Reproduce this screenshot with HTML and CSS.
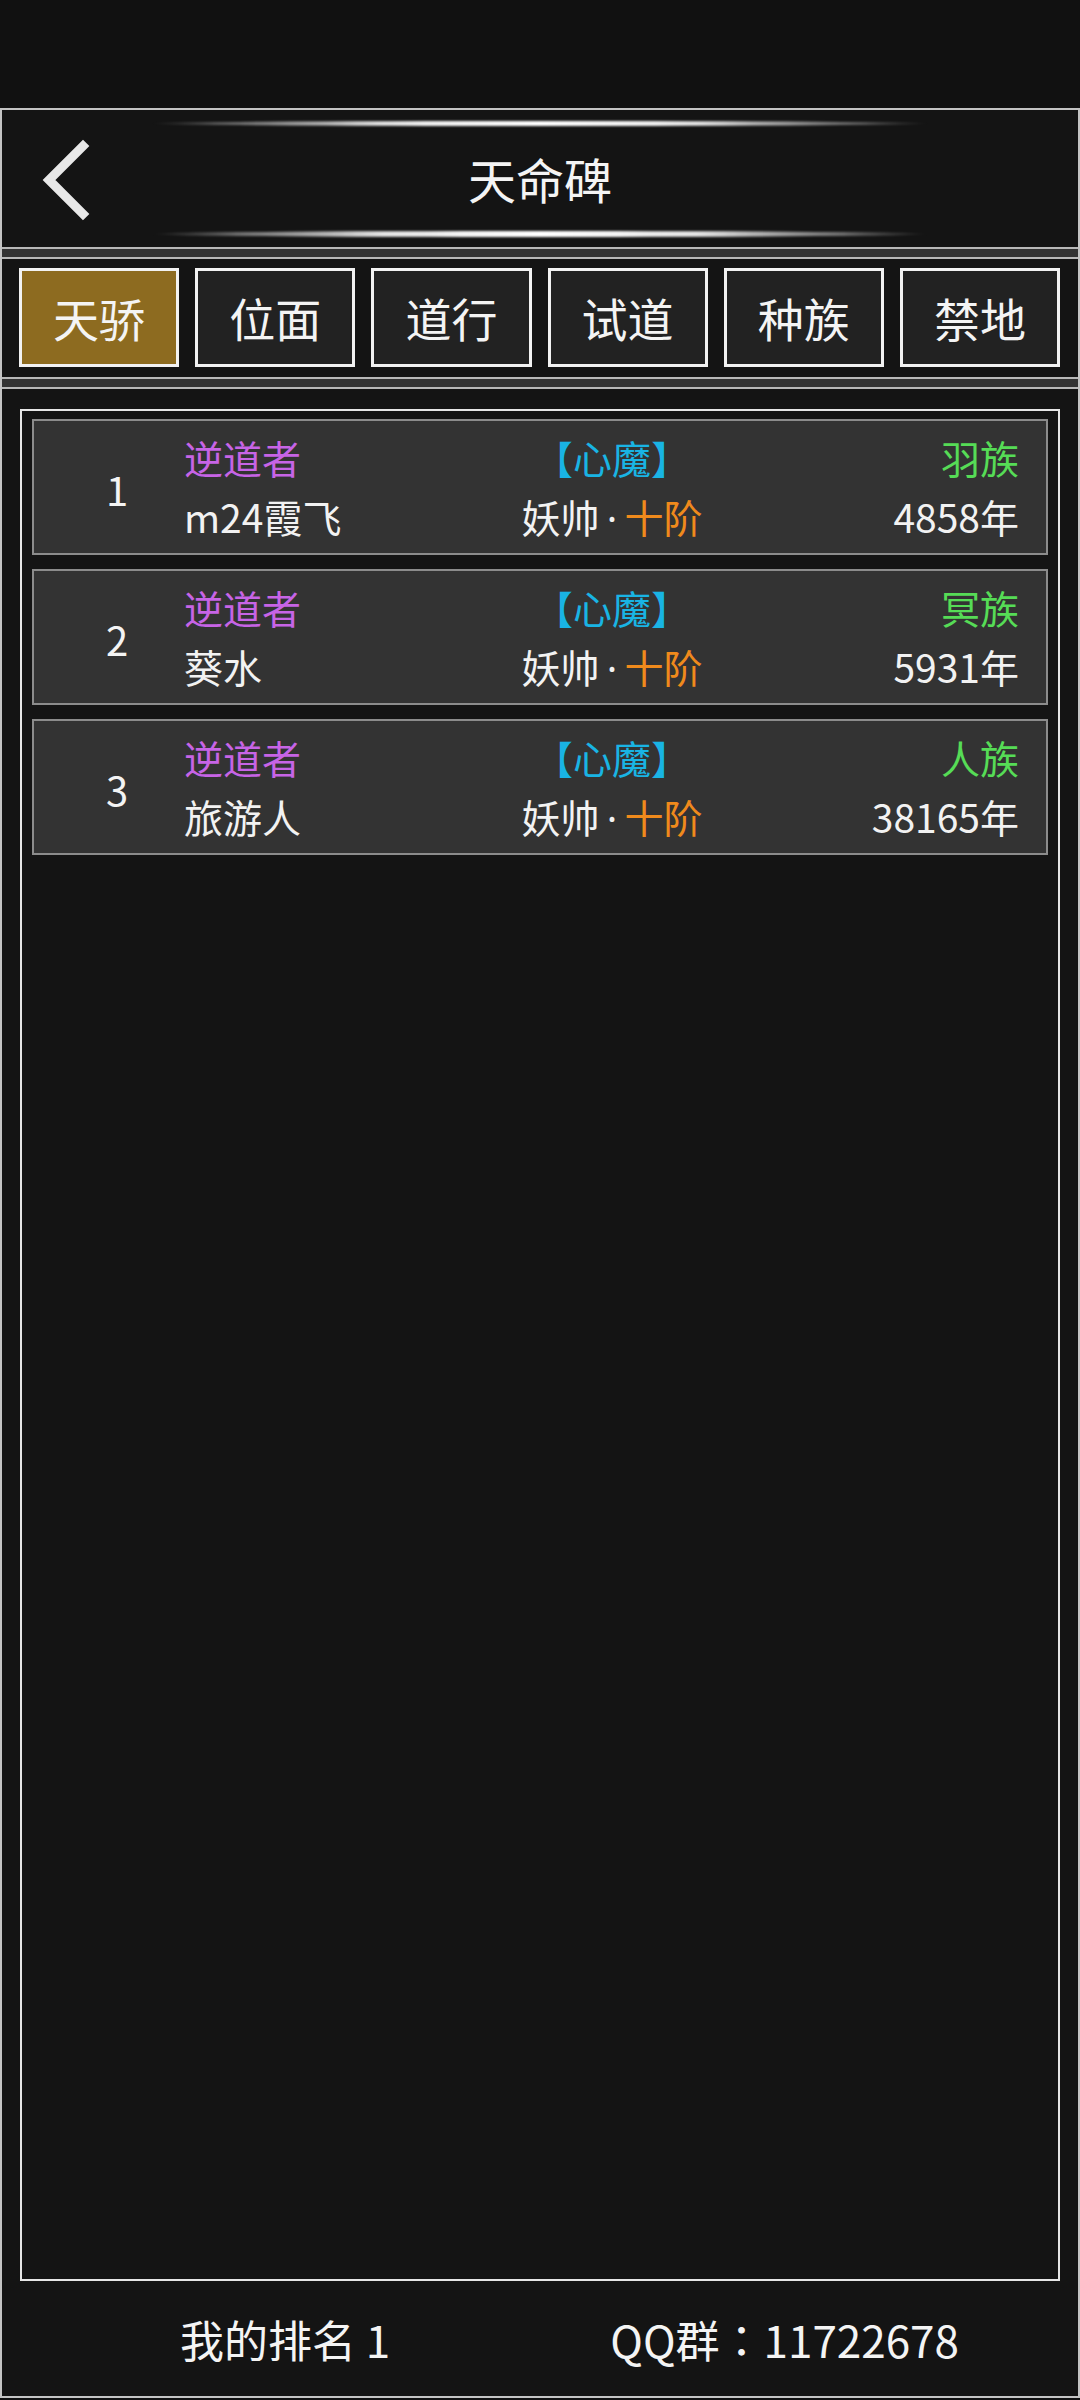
FILE: index.html
```html
<!DOCTYPE html>
<html lang="zh-CN">
<head>
<meta charset="utf-8">
<title>天命碑</title>
<link rel="stylesheet" href="styles.css">
</head>
<body>
<div class="status"></div>
<div class="app">
  <header class="header">
    <div class="glow"></div>
    <div class="bar">
      <div class="back">
        <svg width="60" height="90" viewBox="0 0 60 90"><polyline points="43,7 9,41 43,75" fill="none" stroke="#e8e8e8" stroke-width="9" stroke-linecap="square" stroke-linejoin="miter"/></svg>
      </div>
      <h1 class="title">天命碑</h1>
      <div></div>
    </div>
    <div class="glow glow-b"></div>
  </header>
  <div class="sep"></div>
  <nav class="tabs">
    <div class="tab active">天骄</div>
    <div class="tab">位面</div>
    <div class="tab">道行</div>
    <div class="tab">试道</div>
    <div class="tab">种族</div>
    <div class="tab">禁地</div>
  </nav>
  <div class="sep"></div>
  <main class="panel">
    <div class="card">
      <div class="rank">1</div>
      <div class="col name"><span class="purple">逆道者</span><span>m24霞飞</span></div>
      <div class="col mid"><span class="cyan">【心魔】</span><span>妖帅<span class="dot">·</span><em class="orange">十阶</em></span></div>
      <div class="col right"><span class="green">羽族</span><span>4858年</span></div>
    </div>
    <div class="card">
      <div class="rank">2</div>
      <div class="col name"><span class="purple">逆道者</span><span>葵水</span></div>
      <div class="col mid"><span class="cyan">【心魔】</span><span>妖帅<span class="dot">·</span><em class="orange">十阶</em></span></div>
      <div class="col right"><span class="green">冥族</span><span>5931年</span></div>
    </div>
    <div class="card">
      <div class="rank">3</div>
      <div class="col name"><span class="purple">逆道者</span><span>旅游人</span></div>
      <div class="col mid"><span class="cyan">【心魔】</span><span>妖帅<span class="dot">·</span><em class="orange">十阶</em></span></div>
      <div class="col right"><span class="green">人族</span><span>38165年</span></div>
    </div>
  </main>
  <footer class="footer">
    <span class="myrank">我的排名 1</span>
    <span class="qq">QQ群<span class="colon" lang="ja">：</span>11722678</span>
  </footer>
</div>
</body>
</html>
```

FILE: styles.css
```css
* { box-sizing: border-box; }
html, body { margin: 0; padding: 0; }
body {
  width: 1080px;
  height: 2400px;
  background: #111111;
  color: #f2f2f2;
  font-family: "Noto Sans CJK SC", "Noto Sans", sans-serif;
  overflow: hidden;
}
.status { height: 108px; }
.app {
  height: 2290px;
  border: 2px solid #c4c4c4;
  background: #141414;
  display: flex;
  flex-direction: column;
}
.header {
  height: 137px;
  display: flex;
  flex-direction: column;
  align-items: center;
  padding-top: 11px;
}
.glow {
  width: 780px;
  height: 5px;
  border-radius: 50%;
  background: linear-gradient(to right, rgba(255,255,255,0) 0%, rgba(255,255,255,0.4) 12%, rgba(255,255,255,0.9) 30%, #ffffff 50%, rgba(255,255,255,0.9) 70%, rgba(255,255,255,0.4) 88%, rgba(255,255,255,0) 100%);
  filter: blur(0.8px);
}
.glow-b { height: 6px; }
.bar {
  width: 100%;
  height: 105px;
  display: grid;
  grid-template-columns: 1fr auto 1fr;
  align-items: center;
}
.back {
  padding-left: 38px;
  padding-top: 10px;
  display: flex;
  align-items: center;
}
.title {
  margin: 0;
  font-size: 48px;
  font-weight: 400;
  color: #f4f4f4;
  line-height: 1;
  padding-bottom: 2px;
}
.sep {
  height: 12px;
  border-top: 2px solid #b8b8b8;
  border-bottom: 2px solid #b8b8b8;
  background: #333333;
}
.tabs {
  height: 118px;
  padding: 9px 18px 0 17px;
  display: grid;
  grid-template-columns: repeat(6, 1fr);
  column-gap: 16px;
}
.tab {
  height: 99px;
  border: 3px solid #f2f2f2;
  background: #222222;
  display: flex;
  align-items: center;
  justify-content: center;
  font-size: 46px;
  color: #f4f4f4;
  padding-bottom: 2px;
}
.tab.active { background: #8d6b20; }
.panel {
  flex: 1;
  margin: 20px 18px 0 18px;
  border: 2px solid #e6e6e6;
  padding: 8px 10px;
  display: flex;
  flex-direction: column;
  gap: 14px;
}
.card {
  height: 136px;
  border: 2px solid #8c8c8c;
  background: #333333;
  display: grid;
  grid-template-columns: 64px 335px 256px 1fr;
  align-items: center;
  padding: 0 27px 0 51px;
  font-size: 39px;
  line-height: 59px;
}
.rank {
  text-align: center;
  font-size: 40px;
  color: #f4f4f4;
  padding-top: 4px;
}
.col { display: flex; flex-direction: column; }
.name { padding-left: 35px; }
.mid { align-items: center; }
.right { align-items: flex-end; }
.dot {
  display: inline-block;
  width: 25px;
  text-align: center;
  font-family: "Noto Sans", sans-serif;
}
.purple { color: #c764e6; }
.cyan { color: #19b4e4; }
.green { color: #56dc56; }
.orange { color: #f08a1c; font-style: normal; }
.footer {
  height: 115px;
  display: flex;
  align-items: center;
  padding-left: 178px;
  font-size: 44px;
  color: #f4f4f4;
}
.colon { font-family: "Noto Sans CJK JP", sans-serif; }
.qq { margin-left: 220px; }
```
